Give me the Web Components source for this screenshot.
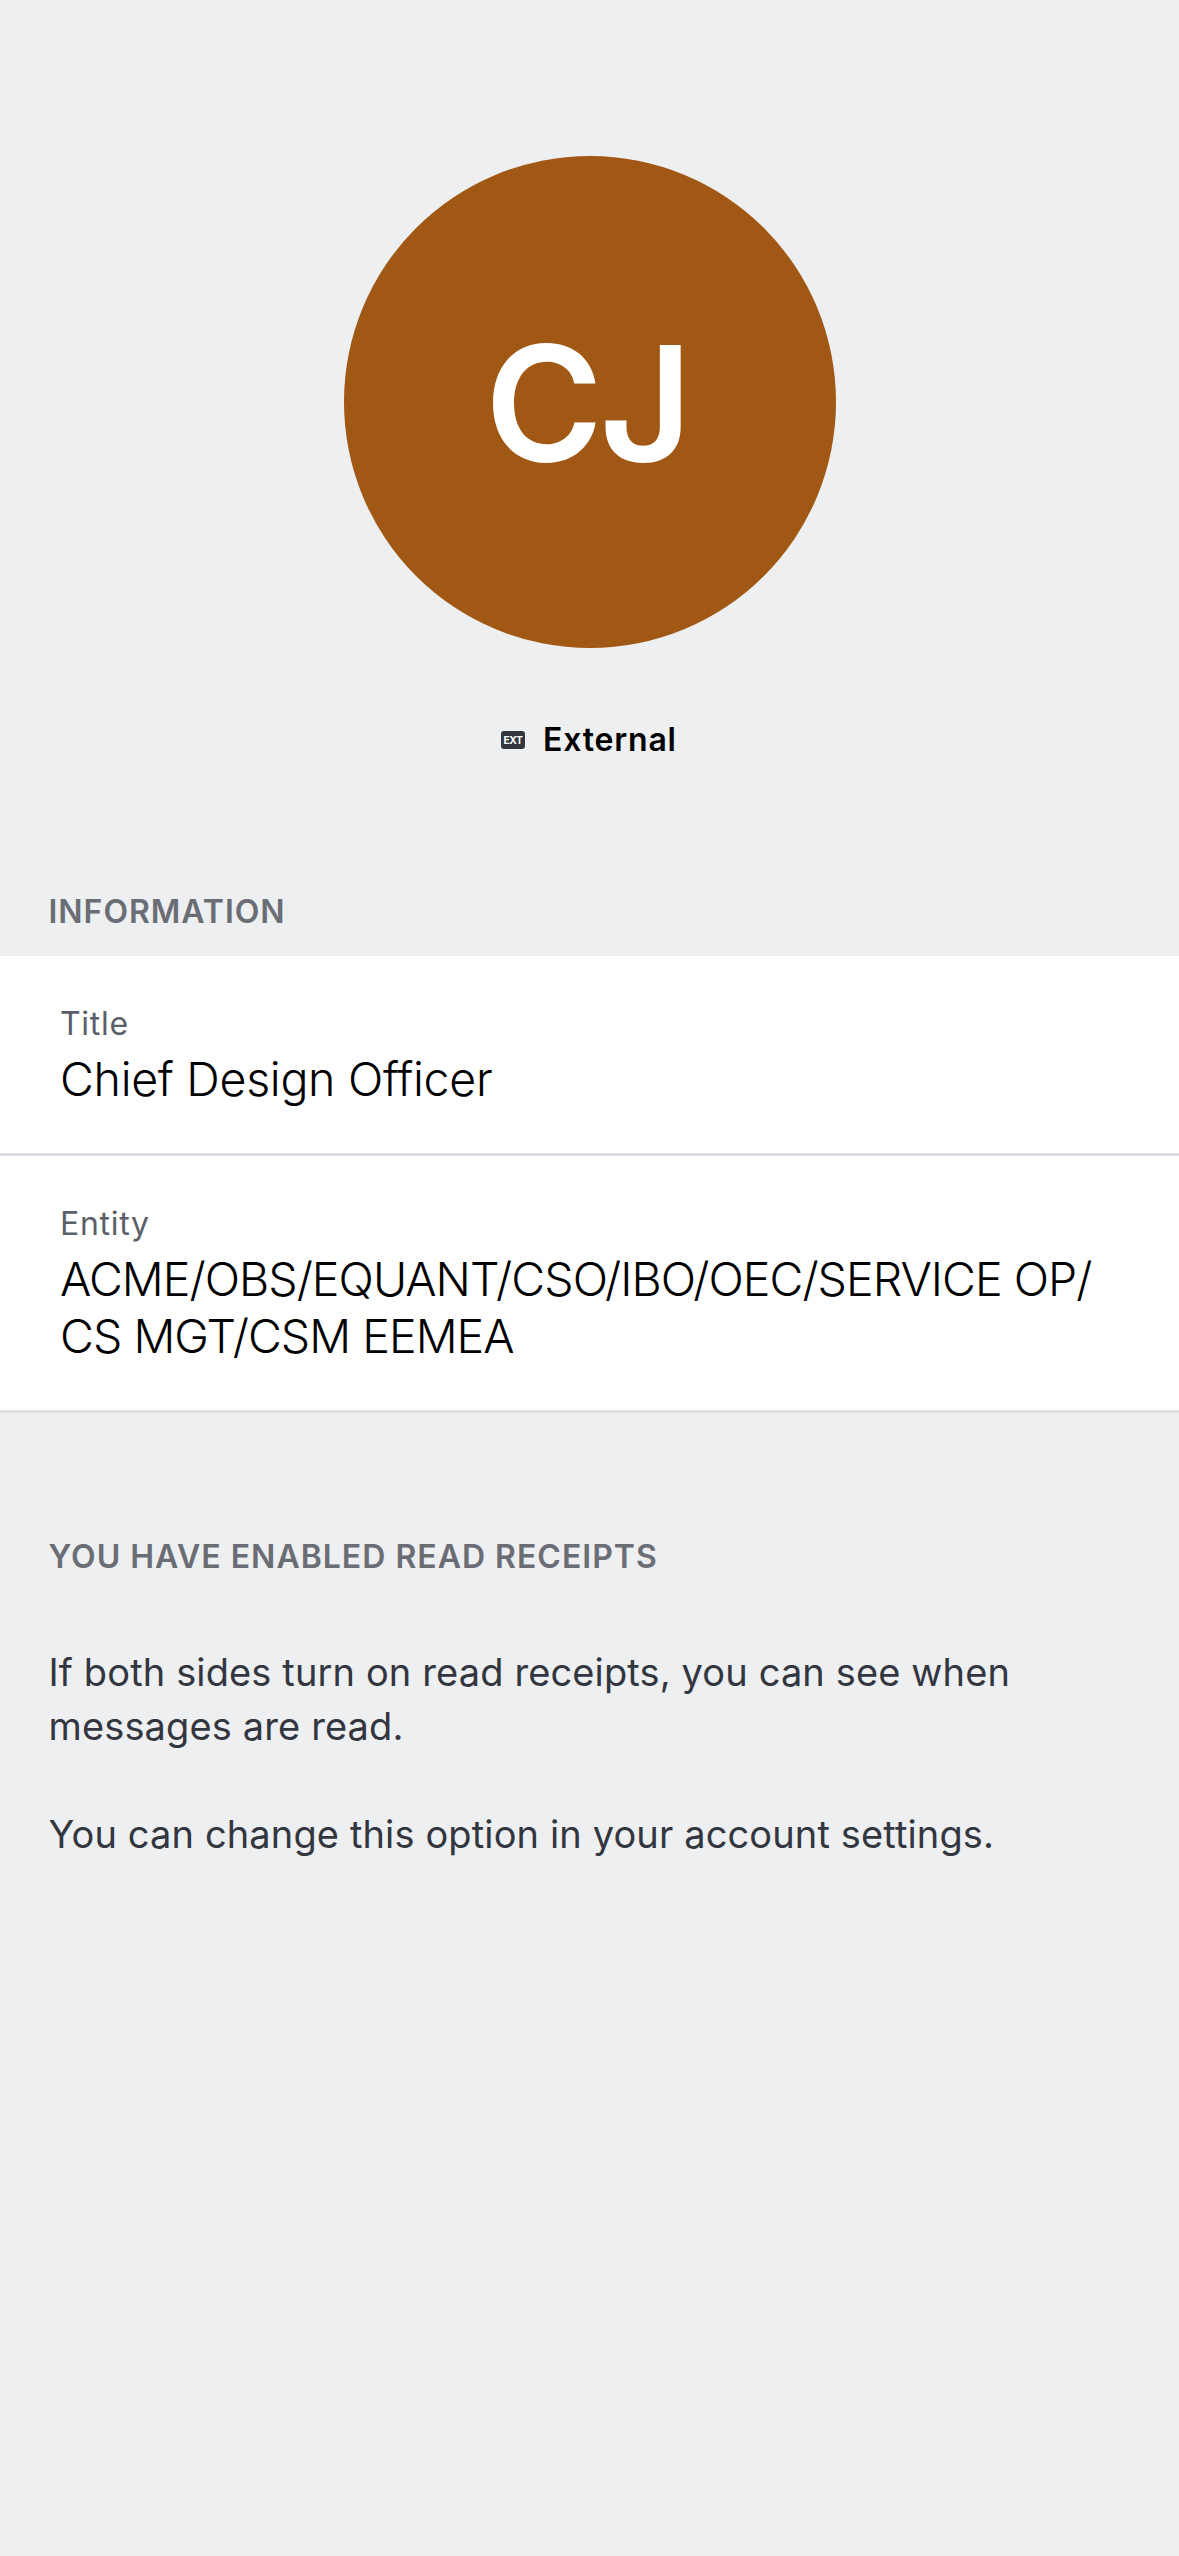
<!DOCTYPE html>
<html lang="en">
<head>
<meta charset="utf-8">
<title>Profile</title>
<style>
body{margin:0;background:#edeff1;font-family:Inter,"Liberation Sans",sans-serif;color:#000}
</style>
</head>
<body>
<profile-page>
  <profile-avatar>CJ</profile-avatar>
  <external-status>External</external-status>
  <info-section label="INFORMATION">
    <info-row label="Title" style="--value-spacing:-.3px">Chief Design Officer</info-row>
    <info-row label="Entity" style="--value-spacing:-.97px;--line:#dddfe1">ACME/OBS/EQUANT/CSO/IBO/OEC/SERVICE OP/<br>CS MGT/CSM EEMEA</info-row>
  </info-section>
  <receipt-note label="YOU HAVE ENABLED READ RECEIPTS">
    <p>If both sides turn on read receipts, you can see when<br>messages are read.</p>
    <p>You can change this option in your account settings.</p>
  </receipt-note>
</profile-page>
<script>
const define = (name, html) => customElements.define(name, class extends HTMLElement {
  constructor() {
    super();
    this.attachShadow({mode: 'open'}).innerHTML = html;
  }
  connectedCallback() {
    const label = this.shadowRoot.querySelector('.label');
    if (label) label.textContent = this.getAttribute('label');
  }
});

define('profile-page', `<style>
  :host{display:flex;flex-direction:column;box-sizing:border-box;min-height:2556px;padding-top:156px}
</style><slot></slot>`);

define('profile-avatar', `<style>
  :host{display:flex;align-items:center;align-self:center;box-sizing:border-box;width:492px;height:492px;
    margin-right:-1px;padding:1px 0 0 141px;border-radius:50%;background:#a15814;color:#fff;
    font-size:160px;font-weight:600;letter-spacing:-3.5px;line-height:1}
</style><slot></slot>`);

define('ext-icon', `<style>
  :host{display:flex;align-items:center;justify-content:center;width:24px;height:18px;border-radius:3px;
    background:#33363f;color:#fff;font-size:10.3px;font-weight:700;line-height:18px;letter-spacing:-.4px}
</style><span>EXT</span>`);

define('external-status', `<style>
  :host{display:flex;align-items:center;height:42px;margin-top:71px;padding-left:501px;gap:18px;
    font-size:32px;font-weight:600;letter-spacing:.8px;line-height:42px}
</style><ext-icon></ext-icon><span><slot></slot></span>`);

define('info-section', `<style>
  :host{display:flex;flex-direction:column;margin-top:130px}
  .label{padding-left:48.5px;color:#6b6d75;font-size:32px;font-weight:600;line-height:42px;letter-spacing:.98px}
  .rows{display:flex;flex-direction:column;margin-top:23px;background:#fff}
</style><div class="label"></div><div class="rows"><slot></slot></div>`);

define('info-row', `<style>
  :host{display:flex;flex-direction:column;gap:6px;padding:47px 0 45px 60px;border-bottom:3px solid var(--line,#dadee2)}
  .label{color:#5b5f69;font-size:32px;line-height:42px;letter-spacing:.7px}
  .value{font-size:46.5px;font-weight:300;line-height:57px;letter-spacing:var(--value-spacing);white-space:nowrap}
</style><div class="label"></div><div class="value"><slot></slot></div>`);

define('receipt-note', `<style>
  :host{display:flex;flex-direction:column;gap:67px;margin-top:123px;padding-left:48.5px}
  .label{color:#6b6d75;font-size:32px;font-weight:600;line-height:42px;letter-spacing:1px}
  .body{display:flex;flex-direction:column;gap:54px;color:#33363f;font-size:38px;line-height:54px;letter-spacing:.13px;white-space:nowrap}
  ::slotted(p){margin:0}
</style><div class="label"></div><div class="body"><slot></slot></div>`);
</script>
</body>
</html>
